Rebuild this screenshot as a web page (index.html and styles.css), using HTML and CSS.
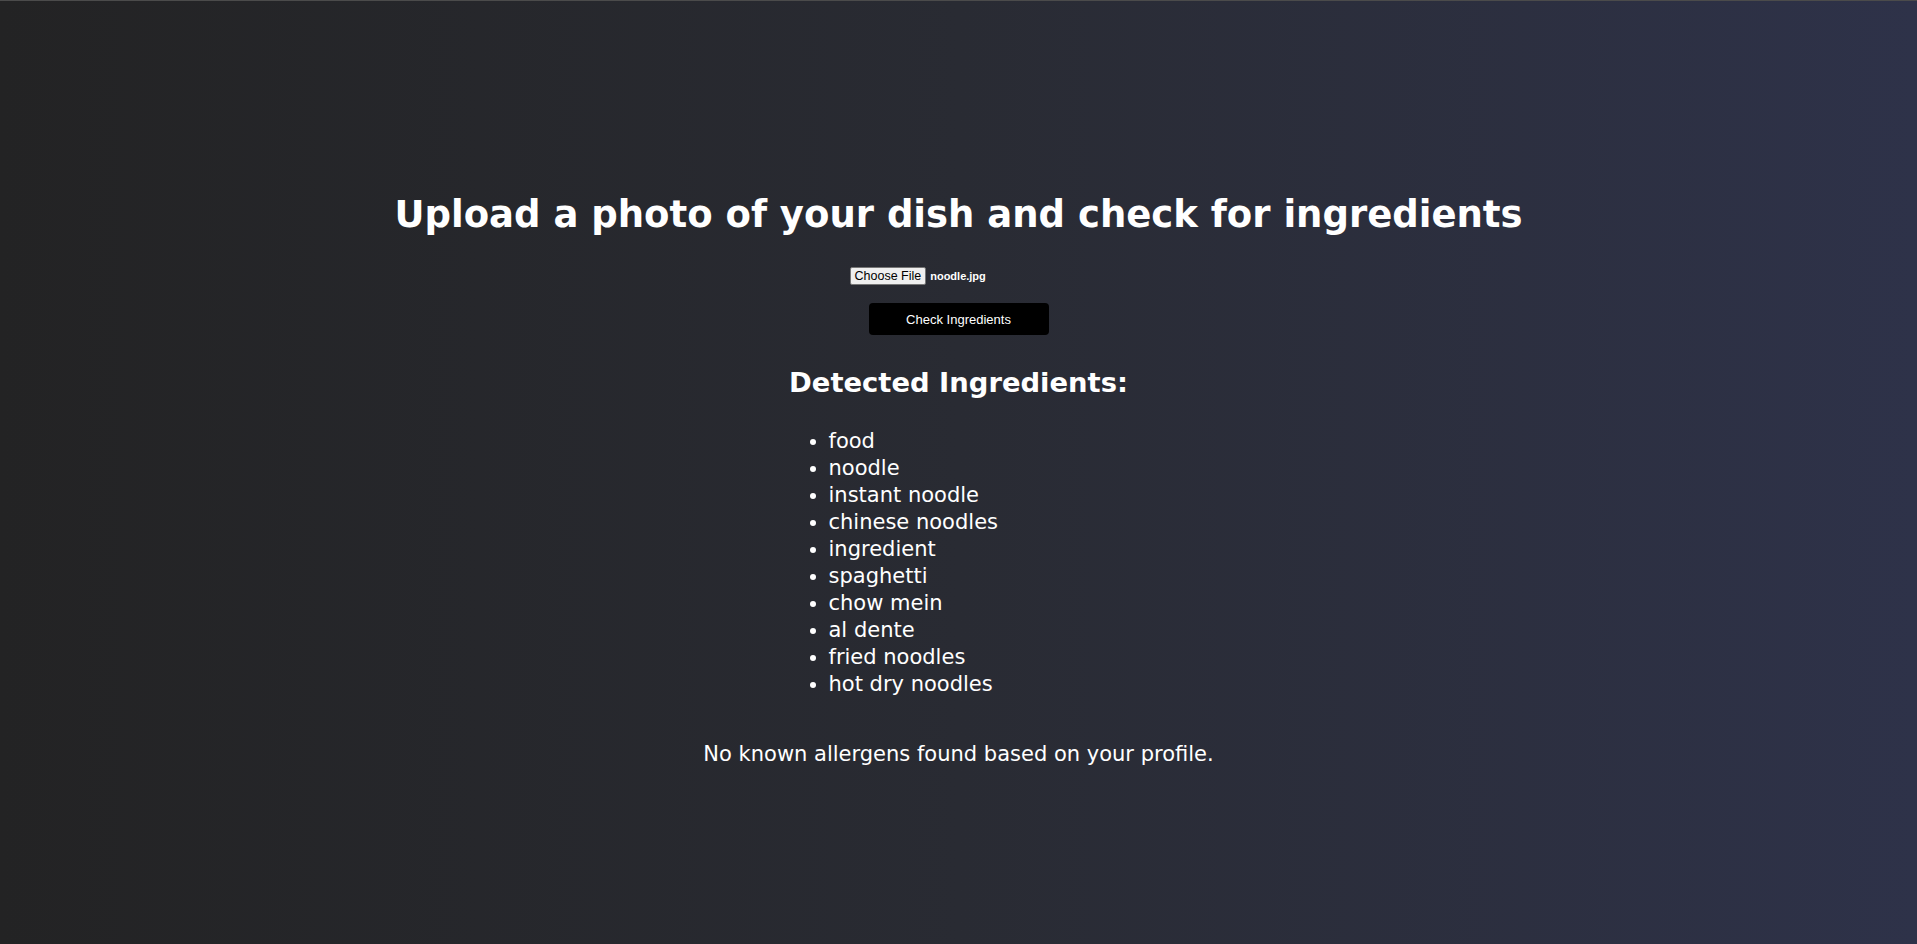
FILE: index.html
```html
<!DOCTYPE html>
<html lang="en">
<head>
<meta charset="utf-8">
<title>Ingredient Checker</title>
<link rel="stylesheet" href="styles.css">
</head>
<body>
<main class="page">
  <h1 class="title">Upload a photo of your dish and check for ingredients</h1>
  <div class="file-row">
    <span class="file-btn">Choose File</span><span class="file-name">noodle.jpg</span>
  </div>
  <button class="check-btn" type="button">Check Ingredients</button>
  <h2 class="subtitle">Detected Ingredients:</h2>
  <ul class="ingredients">
    <li>food</li>
    <li>noodle</li>
    <li>instant noodle</li>
    <li>chinese noodles</li>
    <li>ingredient</li>
    <li>spaghetti</li>
    <li>chow mein</li>
    <li>al dente</li>
    <li>fried noodles</li>
    <li>hot dry noodles</li>
  </ul>
  <p class="result">No known allergens found based on your profile.</p>
</main>
</body>
</html>
```
FILE: styles.css
```css
html, body {
  margin: 0;
  padding: 0;
}
body {
  min-height: 100vh;
  box-sizing: border-box;
  border-top: 1px solid #4b4b4b;
  background: linear-gradient(to right, #232324 0%, #292b33 50%, #2e3249 100%);
  color: #ffffff;
  font-family: "DejaVu Sans", "Lato", sans-serif;
}
.page {
  display: flex;
  flex-direction: column;
  align-items: center;
  padding-top: 190px;
}
.title {
  margin: 0;
  font-size: 37px;
  line-height: 48px;
  font-weight: 700;
}
.file-row {
  margin-top: 26px;
  width: 218px;
  height: 21px;
  display: flex;
  align-items: center;
  font-family: "Liberation Sans", Arial, sans-serif;
  font-size: 12.5px;
}
.file-btn {
  display: inline-block;
  box-sizing: border-box;
  height: 18px;
  line-height: 16px;
  padding: 0 4px;
  background: #efefef;
  color: #000;
  border: 1px solid #767676;
  border-radius: 2px;
  margin-right: 4px;
}
.file-name {
  color: #fff;
  font-weight: 700;
  font-size: 11px;
}
.check-btn {
  margin-top: 17px;
  width: 180px;
  height: 32px;
  background: #000;
  color: #fff;
  border: none;
  border-radius: 4px;
  font-family: "Liberation Sans", Arial, sans-serif;
  font-size: 13px;
  padding: 0;
}
.subtitle {
  margin: 31px 0 0;
  font-size: 27.4px;
  line-height: 34px;
  font-weight: 700;
}
.ingredients {
  box-sizing: border-box;
  width: 340px;
  margin: 28px 0 0;
  padding-left: 40px;
  font-size: 21px;
  line-height: 27px;
}
.result {
  margin: 43px 0 0;
  font-size: 21px;
  line-height: 27px;
}
```
